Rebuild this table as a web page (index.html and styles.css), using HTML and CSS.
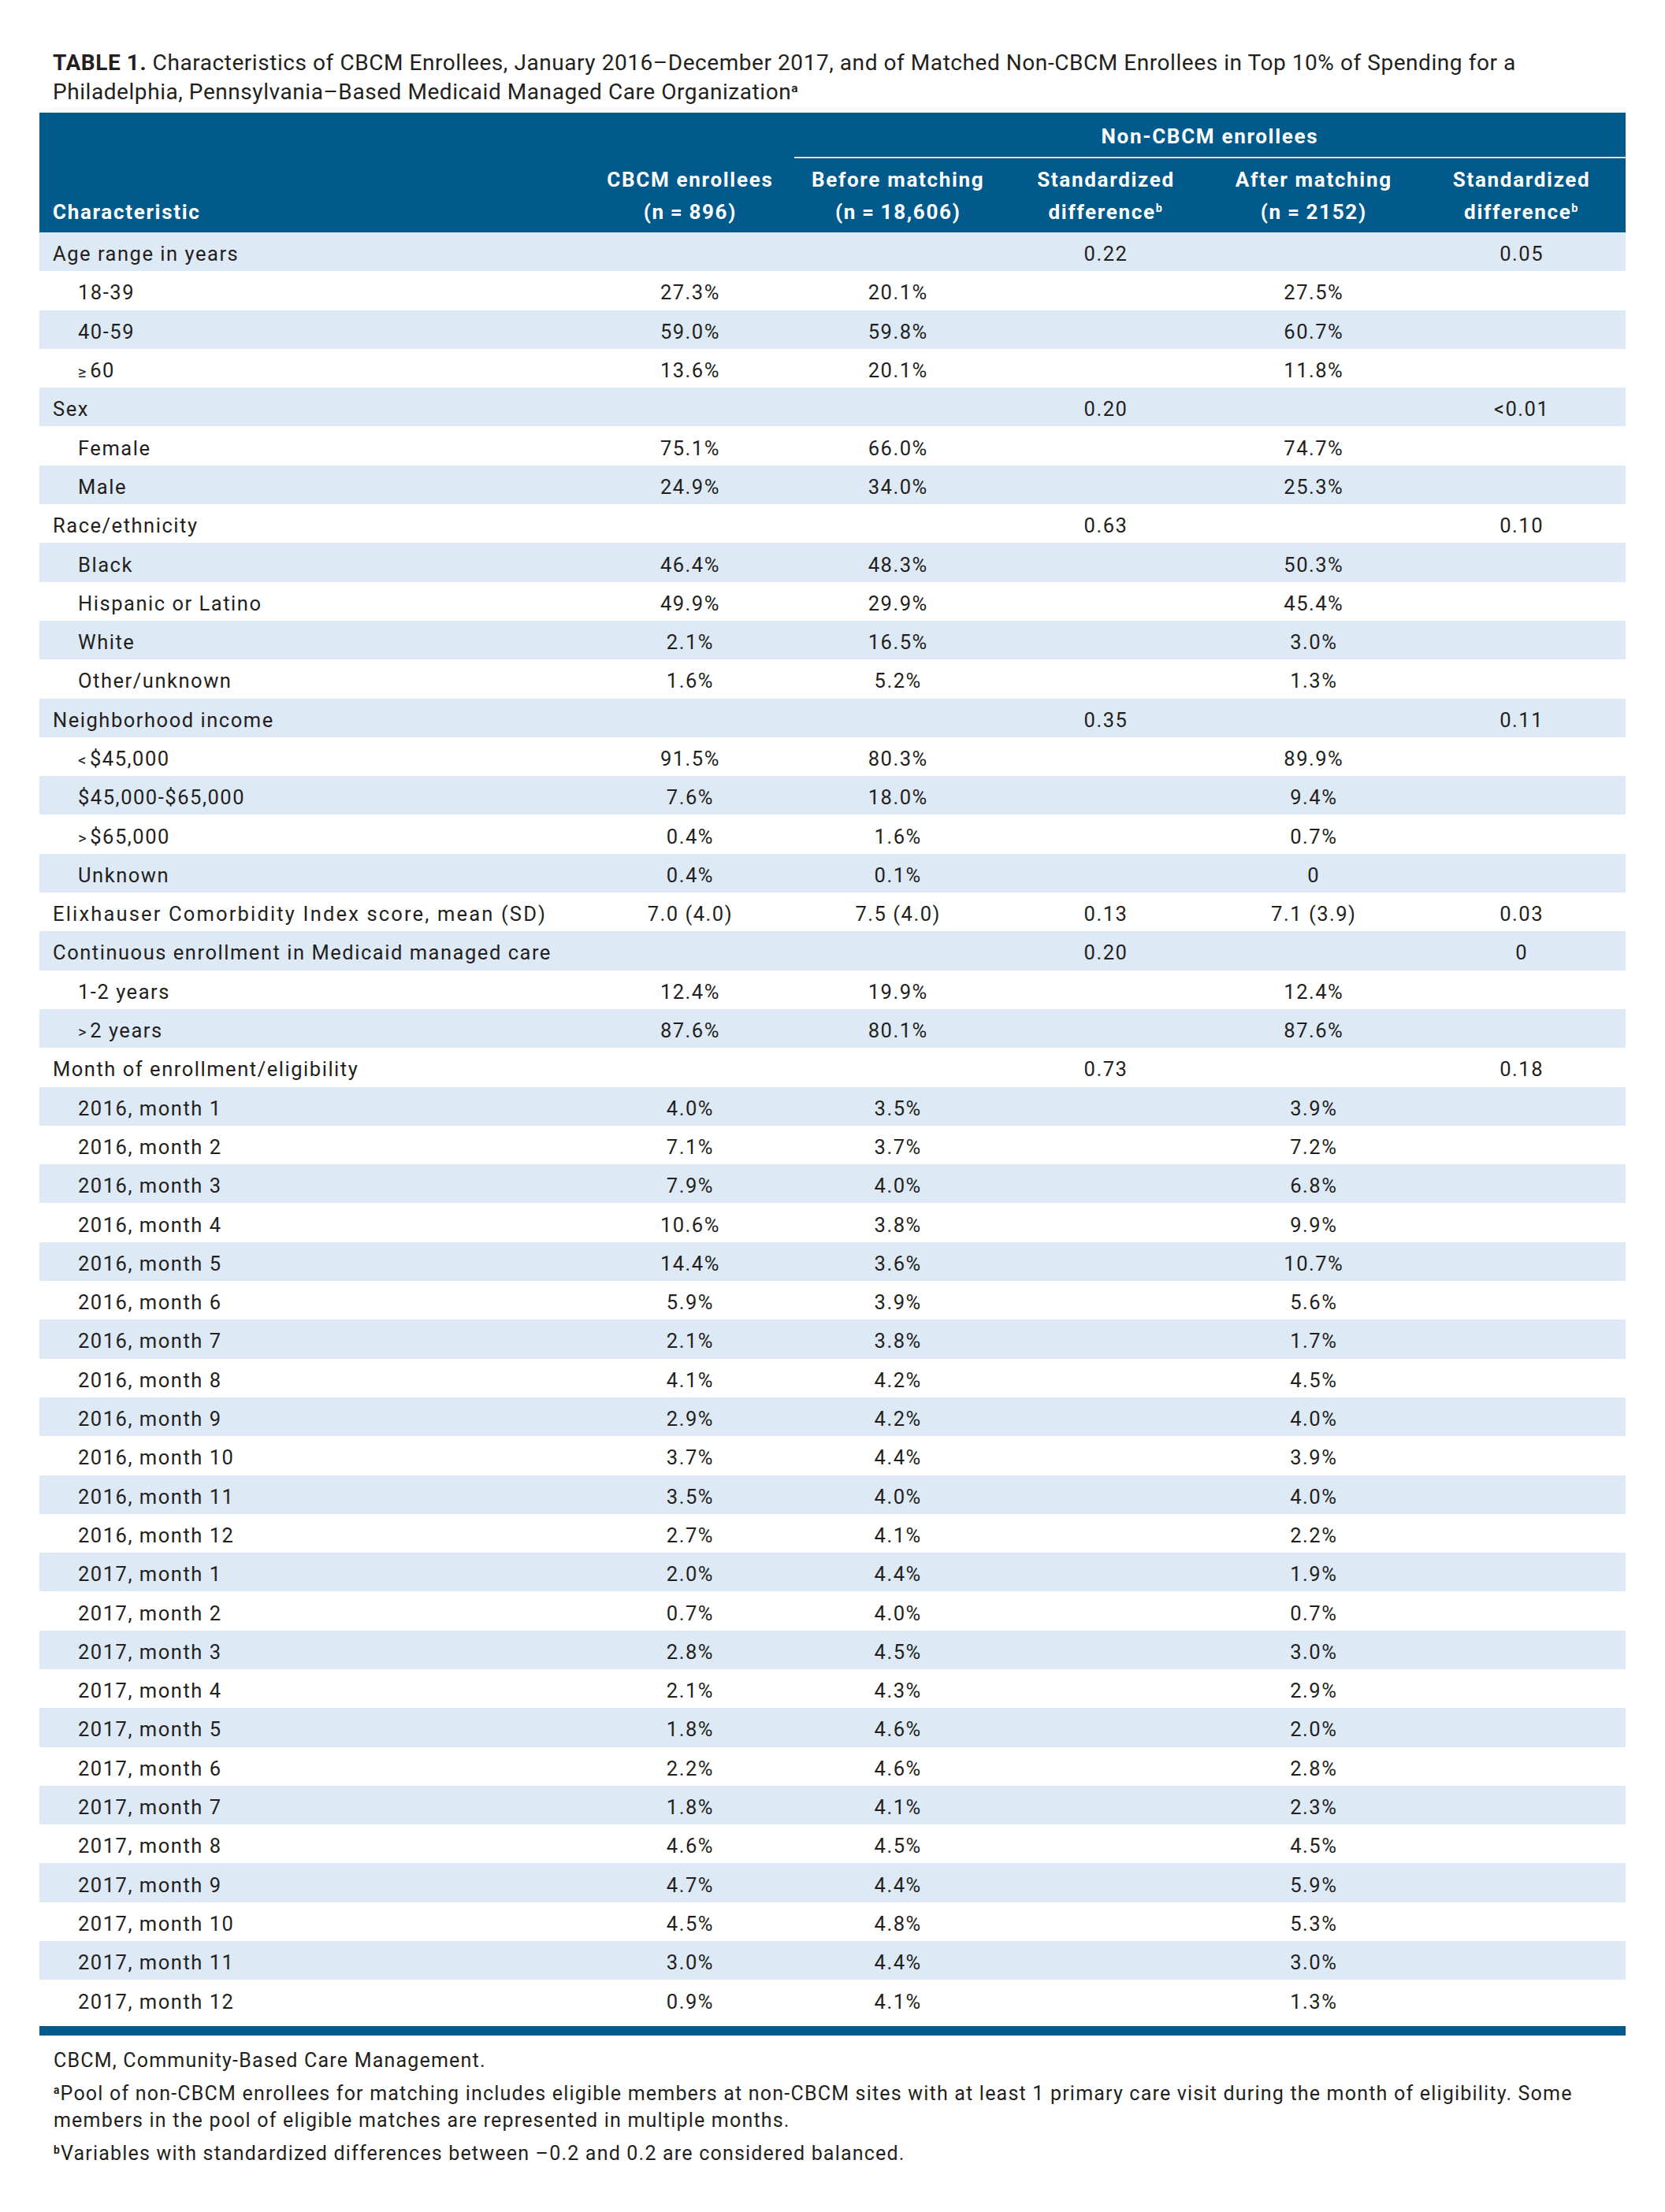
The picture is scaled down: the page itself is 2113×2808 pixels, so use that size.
FILE: index.html
```html
<!DOCTYPE html>
<html>
<head>
<meta charset="utf-8">
<link rel="stylesheet" href="styles.css">
</head>
<body>
<div class="page">
  <p class="title"><b>TABLE 1.</b> Characteristics of CBCM Enrollees, January 2016–December 2017, and of Matched Non-CBCM Enrollees in Top 10% of Spending for a Philadelphia, Pennsylvania–Based Medicaid Managed Care Organization<sup>a</sup></p>
  <table class="tbl">
    <colgroup>
      <col class="c-char"><col class="c-num"><col class="c-num"><col class="c-num"><col class="c-num"><col class="c-num">
    </colgroup>
    <thead>
      <tr class="h1">
        <th></th><th></th>
        <th colspan="4" class="group"><span>Non-CBCM enrollees</span></th>
      </tr>
      <tr class="h2">
        <th class="left">Characteristic</th>
        <th>CBCM enrollees<br>(n&thinsp;=&thinsp;896)</th>
        <th>Before matching<br>(n&thinsp;=&thinsp;18,606)</th>
        <th>Standardized<br>difference<sup>b</sup></th>
        <th>After matching<br>(n&thinsp;=&thinsp;2152)</th>
        <th>Standardized<br>difference<sup>b</sup></th>
      </tr>
    </thead>
    <tbody>
      <tr><td>Age range in years</td><td></td><td></td><td>0.22</td><td></td><td>0.05</td></tr>
      <tr><td class="in">18-39</td><td>27.3%</td><td>20.1%</td><td></td><td>27.5%</td><td></td></tr>
      <tr><td class="in">40-59</td><td>59.0%</td><td>59.8%</td><td></td><td>60.7%</td><td></td></tr>
      <tr><td class="in"><span class="op">≥</span>60</td><td>13.6%</td><td>20.1%</td><td></td><td>11.8%</td><td></td></tr>
      <tr><td>Sex</td><td></td><td></td><td>0.20</td><td></td><td>&lt;0.01</td></tr>
      <tr><td class="in">Female</td><td>75.1%</td><td>66.0%</td><td></td><td>74.7%</td><td></td></tr>
      <tr><td class="in">Male</td><td>24.9%</td><td>34.0%</td><td></td><td>25.3%</td><td></td></tr>
      <tr><td>Race/ethnicity</td><td></td><td></td><td>0.63</td><td></td><td>0.10</td></tr>
      <tr><td class="in">Black</td><td>46.4%</td><td>48.3%</td><td></td><td>50.3%</td><td></td></tr>
      <tr><td class="in">Hispanic or Latino</td><td>49.9%</td><td>29.9%</td><td></td><td>45.4%</td><td></td></tr>
      <tr><td class="in">White</td><td>2.1%</td><td>16.5%</td><td></td><td>3.0%</td><td></td></tr>
      <tr><td class="in">Other/unknown</td><td>1.6%</td><td>5.2%</td><td></td><td>1.3%</td><td></td></tr>
      <tr><td>Neighborhood income</td><td></td><td></td><td>0.35</td><td></td><td>0.11</td></tr>
      <tr><td class="in"><span class="op">&lt;</span>$45,000</td><td>91.5%</td><td>80.3%</td><td></td><td>89.9%</td><td></td></tr>
      <tr><td class="in">$45,000-$65,000</td><td>7.6%</td><td>18.0%</td><td></td><td>9.4%</td><td></td></tr>
      <tr><td class="in"><span class="op">&gt;</span>$65,000</td><td>0.4%</td><td>1.6%</td><td></td><td>0.7%</td><td></td></tr>
      <tr><td class="in">Unknown</td><td>0.4%</td><td>0.1%</td><td></td><td>0</td><td></td></tr>
      <tr><td class="wide">Elixhauser Comorbidity Index score, mean (SD)</td><td>7.0 (4.0)</td><td>7.5 (4.0)</td><td>0.13</td><td>7.1 (3.9)</td><td>0.03</td></tr>
      <tr><td>Continuous enrollment in Medicaid managed care</td><td></td><td></td><td>0.20</td><td></td><td>0</td></tr>
      <tr><td class="in">1-2 years</td><td>12.4%</td><td>19.9%</td><td></td><td>12.4%</td><td></td></tr>
      <tr><td class="in"><span class="op">&gt;</span>2 years</td><td>87.6%</td><td>80.1%</td><td></td><td>87.6%</td><td></td></tr>
      <tr><td>Month of enrollment/eligibility</td><td></td><td></td><td>0.73</td><td></td><td>0.18</td></tr>
      <tr><td class="in">2016, month 1</td><td>4.0%</td><td>3.5%</td><td></td><td>3.9%</td><td></td></tr>
      <tr><td class="in">2016, month 2</td><td>7.1%</td><td>3.7%</td><td></td><td>7.2%</td><td></td></tr>
      <tr><td class="in">2016, month 3</td><td>7.9%</td><td>4.0%</td><td></td><td>6.8%</td><td></td></tr>
      <tr><td class="in">2016, month 4</td><td>10.6%</td><td>3.8%</td><td></td><td>9.9%</td><td></td></tr>
      <tr><td class="in">2016, month 5</td><td>14.4%</td><td>3.6%</td><td></td><td>10.7%</td><td></td></tr>
      <tr><td class="in">2016, month 6</td><td>5.9%</td><td>3.9%</td><td></td><td>5.6%</td><td></td></tr>
      <tr><td class="in">2016, month 7</td><td>2.1%</td><td>3.8%</td><td></td><td>1.7%</td><td></td></tr>
      <tr><td class="in">2016, month 8</td><td>4.1%</td><td>4.2%</td><td></td><td>4.5%</td><td></td></tr>
      <tr><td class="in">2016, month 9</td><td>2.9%</td><td>4.2%</td><td></td><td>4.0%</td><td></td></tr>
      <tr><td class="in">2016, month 10</td><td>3.7%</td><td>4.4%</td><td></td><td>3.9%</td><td></td></tr>
      <tr><td class="in">2016, month 11</td><td>3.5%</td><td>4.0%</td><td></td><td>4.0%</td><td></td></tr>
      <tr><td class="in">2016, month 12</td><td>2.7%</td><td>4.1%</td><td></td><td>2.2%</td><td></td></tr>
      <tr><td class="in">2017, month 1</td><td>2.0%</td><td>4.4%</td><td></td><td>1.9%</td><td></td></tr>
      <tr><td class="in">2017, month 2</td><td>0.7%</td><td>4.0%</td><td></td><td>0.7%</td><td></td></tr>
      <tr><td class="in">2017, month 3</td><td>2.8%</td><td>4.5%</td><td></td><td>3.0%</td><td></td></tr>
      <tr><td class="in">2017, month 4</td><td>2.1%</td><td>4.3%</td><td></td><td>2.9%</td><td></td></tr>
      <tr><td class="in">2017, month 5</td><td>1.8%</td><td>4.6%</td><td></td><td>2.0%</td><td></td></tr>
      <tr><td class="in">2017, month 6</td><td>2.2%</td><td>4.6%</td><td></td><td>2.8%</td><td></td></tr>
      <tr><td class="in">2017, month 7</td><td>1.8%</td><td>4.1%</td><td></td><td>2.3%</td><td></td></tr>
      <tr><td class="in">2017, month 8</td><td>4.6%</td><td>4.5%</td><td></td><td>4.5%</td><td></td></tr>
      <tr><td class="in">2017, month 9</td><td>4.7%</td><td>4.4%</td><td></td><td>5.9%</td><td></td></tr>
      <tr><td class="in">2017, month 10</td><td>4.5%</td><td>4.8%</td><td></td><td>5.3%</td><td></td></tr>
      <tr><td class="in">2017, month 11</td><td>3.0%</td><td>4.4%</td><td></td><td>3.0%</td><td></td></tr>
      <tr><td class="in">2017, month 12</td><td>0.9%</td><td>4.1%</td><td></td><td>1.3%</td><td></td></tr>
    </tbody>
  </table>
  <div class="bar"></div>
  <div class="notes">
    <p>CBCM, Community-Based Care Management.</p>
    <p><sup>a</sup>Pool of non-CBCM enrollees for matching includes eligible members at non-CBCM sites with at least 1 primary care visit during the month of eligibility. Some members in the pool of eligible matches are represented in multiple months.</p>
    <p><sup>b</sup>Variables with standardized differences between –0.2 and 0.2 are considered balanced.</p>
  </div>
</div>
</body>
</html>
```

FILE: styles.css
```css
html, body {
  margin: 0;
  padding: 0;
  background: #ffffff;
}

body {
  font-family: Roboto, "Liberation Sans", sans-serif;
  color: #231f20;
}

.page {
  padding: 0 50px;
  width: 2013px;
}

.title {
  margin: 0;
  padding: 62px 0 0 17px;
  font-size: 28px;
  line-height: 36.5px;
  letter-spacing: 0.02em;
}

.title b {
  font-weight: 700;
}

.title sup,
.notes sup,
.h2 sup {
  font-size: 0.55em;
  font-weight: 700;
  line-height: 0;
  vertical-align: 0.6em;
}

.tbl {
  margin-top: 8px;
  width: 2013px;
  border-collapse: collapse;
  table-layout: fixed;
  font-size: 25.5px;
  letter-spacing: 0.06em;
}

.c-char { width: 694px; }
.c-num { width: 263.8px; }

thead th {
  background: #005a8c;
  color: #ffffff;
  font-weight: 700;
  text-align: center;
  padding: 0;
  font-size: 26px;
  line-height: 41px;
  letter-spacing: 0.065em;
}

.h1 th {
  height: 56px;
  vertical-align: middle;
}

.h1 th.group {
  border-bottom: 2px solid #d3e0ec;
}

.h1 th.group span {
  position: relative;
  top: 2px;
}

.h2 th {
  height: 95px;
  vertical-align: bottom;
  padding-bottom: 5px;
  box-sizing: border-box;
}

.h2 th.left {
  text-align: left;
  padding-left: 17px;
}

tbody td {
  height: 49.3px;
  padding: 5px 0 0 0;
  box-sizing: border-box;
  text-align: center;
  vertical-align: middle;
  white-space: nowrap;
}

tbody td:first-child {
  text-align: left;
  padding-left: 17px;
}

tbody td.in {
  padding-left: 49px;
}

tbody td.wide {
  letter-spacing: 0.085em;
}

tbody tr:nth-child(odd) td {
  background: #dde9f5;
}

.op {
  font-size: 0.8em;
  margin-right: 3px;
}

.bar {
  margin-top: 9px;
  height: 12px;
  background: #005a8c;
}

.notes {
  padding: 15px 40px 0 18px;
  font-size: 25px;
  line-height: 34px;
  letter-spacing: 0.048em;
}

.notes p {
  margin: 0 0 8px 0;
}
```
